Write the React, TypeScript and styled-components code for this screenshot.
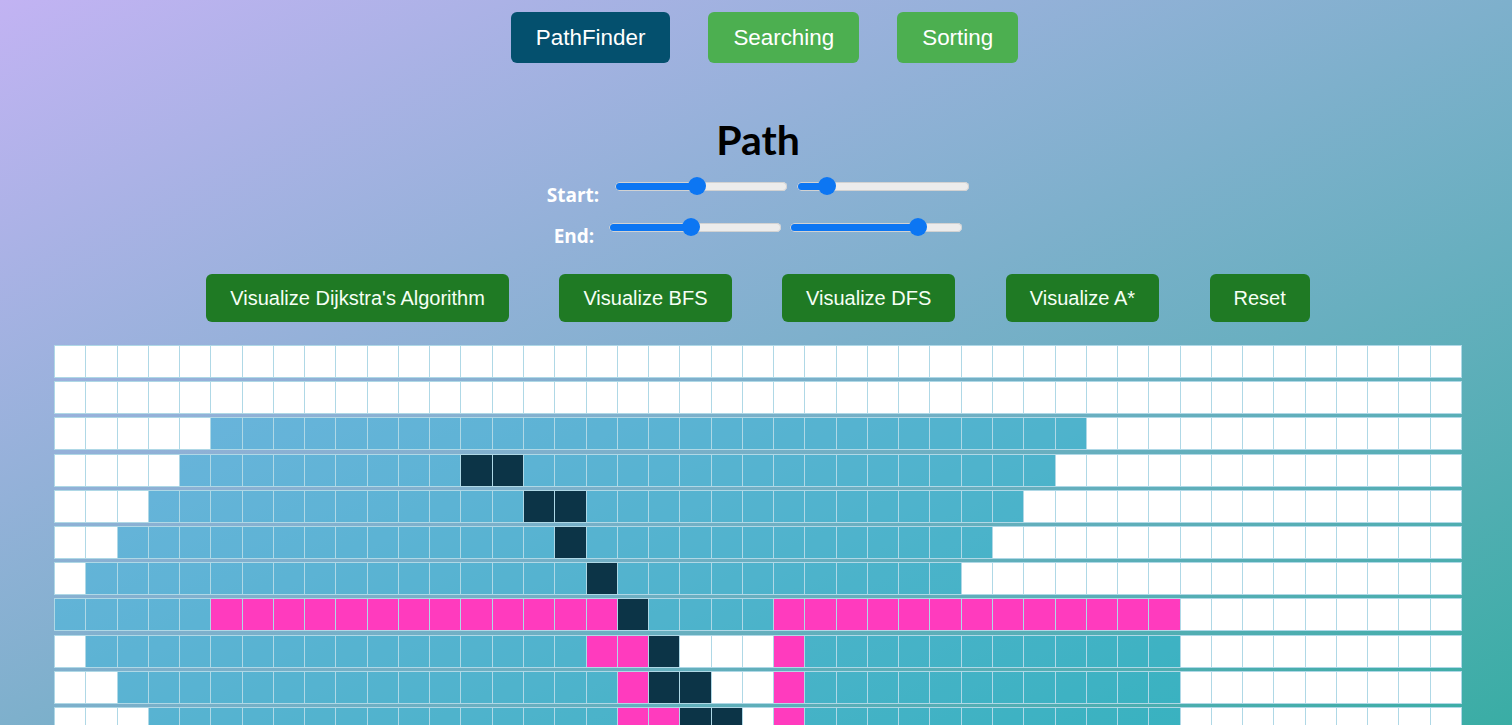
import React from "react";
import styled, { createGlobalStyle } from "styled-components";

const GlobalStyle = createGlobalStyle`
  html, body {
    margin: 0;
    padding: 0;
    height: 100%;
    overflow: hidden;
  }
  body {
    font-family: "Liberation Sans", Arial, sans-serif;
  }
`;

type Kind = "w" | "v" | "p" | "x";

const Page = styled.div`
  box-sizing: border-box;
  height: 100vh;
  overflow: hidden;
  padding-left: 4px;
  display: flex;
  flex-direction: column;
  align-items: center;
  background: linear-gradient(to bottom right, #c2b3f3, #3aada5);
`;

const Nav = styled.nav`
  display: flex;
  gap: 38px;
  margin-top: 12px;
  padding-left: 13px;
`;

const NavButton = styled.button<{ $active?: boolean }>`
  height: 51px;
  padding: 0 25px;
  border: none;
  border-radius: 6px;
  background: ${(p) => (p.$active ? "#04506e" : "#4caf50")};
  color: #ffffff;
  font-family: "Liberation Sans", Arial, sans-serif;
  font-size: 22.4px;
  cursor: pointer;
`;

const Title = styled.h1`
  margin: 53px 0 0;
  font-family: Lato, "Open Sans", sans-serif;
  font-weight: 700;
  font-size: 41px;
  line-height: 48px;
  color: #000;
`;

const Controls = styled.div`
  display: flex;
  flex-direction: column;
  align-items: center;
  gap: 5px;
  margin-top: 7px;
`;

const SliderRow = styled.div<{ $gap: number }>`
  display: flex;
  align-items: flex-start;
  height: 36px;
  gap: ${(p) => p.$gap}px;
`;

const Label = styled.label`
  margin-top: 12.5px;
  margin-right: 6px;
  font-family: "Open Sans", "Noto Sans", sans-serif;
  font-weight: 700;
  font-size: 19px;
  line-height: 22px;
  color: #ffffff;
`;

const Range = styled.input<{ $fill: number }>`
  -webkit-appearance: none;
  appearance: none;
  width: 172px;
  height: 18px;
  margin: 6px 0 0;
  padding: 0;
  background: transparent;
  cursor: pointer;

  &::-webkit-slider-runnable-track {
    height: 9px;
    border-radius: 5px;
    box-shadow: inset 0 0 0 1px #d2d2d2;
    background: linear-gradient(
      to right,
      #0c76f3 0,
      #0c76f3 ${(p) => p.$fill}%,
      #ececec ${(p) => p.$fill}%,
      #ececec 100%
    );
  }
  &::-webkit-slider-thumb {
    -webkit-appearance: none;
    appearance: none;
    width: 18px;
    height: 18px;
    margin-top: -4.5px;
    border-radius: 50%;
    background: #0c76f3;
    border: none;
  }
`;

const ButtonBar = styled.div`
  display: flex;
  gap: 50.5px;
  margin-top: 26px;
`;

const AlgoButton = styled.button`
  height: 48px;
  padding: 0 24px;
  border: none;
  border-radius: 6px;
  background: #1f7a24;
  color: #f6fff4;
  font-family: "Liberation Sans", Arial, sans-serif;
  font-size: 20px;
  cursor: pointer;
`;

const Grid = styled.div`
  width: 1408px;
  margin-top: 23px;
  display: flex;
  flex-direction: column;
  gap: 3.2px;
`;

const Row = styled.div`
  display: flex;
`;

const colors: Record<Kind, string> = {
  w: "#ffffff",
  v: "rgba(29, 186, 227, 0.35)",
  p: "#ff3bbe",
  x: "#0c3447",
};

const Cell = styled.div<{ $kind: Kind }>`
  box-sizing: border-box;
  flex: 1 1 0;
  min-width: 0;
  height: 33px;
  border: 1px solid #afd8e6;
  border-right: none;
  background: ${(p) => colors[p.$kind]};
  &:last-child {
    border-right: 1px solid #afd8e6;
  }
`;

type Seg = [Kind, number];

const layout: Seg[][] = [
  [["w", 45]],
  [["w", 45]],
  [["w", 5], ["v", 28], ["w", 12]],
  [["w", 4], ["v", 9], ["x", 2], ["v", 17], ["w", 13]],
  [["w", 3], ["v", 12], ["x", 2], ["v", 14], ["w", 14]],
  [["w", 2], ["v", 14], ["x", 1], ["v", 13], ["w", 15]],
  [["w", 1], ["v", 16], ["x", 1], ["v", 11], ["w", 16]],
  [["v", 5], ["p", 13], ["x", 1], ["v", 4], ["p", 13], ["w", 9]],
  [["w", 1], ["v", 16], ["p", 2], ["x", 1], ["w", 3], ["p", 1], ["v", 12], ["w", 9]],
  [["w", 2], ["v", 16], ["p", 1], ["x", 2], ["w", 2], ["p", 1], ["v", 12], ["w", 9]],
  [["w", 3], ["v", 15], ["p", 2], ["x", 2], ["w", 1], ["p", 1], ["v", 12], ["w", 9]],
  [["w", 4], ["v", 14], ["p", 1], ["x", 2], ["w", 2], ["p", 1], ["v", 12], ["w", 9]],
  [["w", 5], ["v", 13], ["p", 1], ["x", 1], ["w", 3], ["p", 1], ["v", 12], ["w", 9]],
  [["w", 6], ["v", 13], ["p", 4], ["p", 1], ["v", 12], ["w", 9]],
  [["w", 7], ["v", 29], ["w", 9]],
  [["w", 8], ["v", 27], ["w", 10]],
  [["w", 9], ["v", 25], ["w", 11]],
  [["w", 10], ["v", 23], ["w", 12]],
  [["w", 11], ["v", 21], ["w", 13]],
  [["w", 45]],
];

const expand = (segs: Seg[]): Kind[] =>
  segs.flatMap(([k, n]) => Array.from({ length: n }, () => k));

const ROW_MAX = 19;
const COL_MAX = 44;

const fillPct = (value: number, max: number) => {
  const w = 172;
  const thumb = 18;
  return ((thumb / 2 + (value / max) * (w - thumb)) / w) * 100;
};

const Slider: React.FC<{ initial: number; max: number }> = ({ initial, max }) => {
  const [value, setValue] = React.useState(initial);
  return (
    <Range
      type="range"
      min={0}
      max={max}
      value={value}
      $fill={fillPct(value, max)}
      onChange={(e) => setValue(Number(e.target.value))}
    />
  );
};

export default function App() {
  const grid = React.useMemo(() => layout.map(expand), []);
  return (
    <>
      <GlobalStyle />
      <Page>
        <Nav>
          <NavButton $active>PathFinder</NavButton>
          <NavButton>Searching</NavButton>
          <NavButton>Sorting</NavButton>
        </Nav>
        <Title>Path</Title>
        <Controls>
          <SliderRow $gap={10}>
            <Label>Start:</Label>
            <Slider initial={9} max={ROW_MAX} />
            <Slider initial={6} max={COL_MAX} />
          </SliderRow>
          <SliderRow $gap={9}>
            <Label>End:</Label>
            <Slider initial={9} max={ROW_MAX} />
            <Slider initial={34} max={COL_MAX} />
          </SliderRow>
        </Controls>
        <ButtonBar>
          <AlgoButton>Visualize Dijkstra's Algorithm</AlgoButton>
          <AlgoButton>Visualize BFS</AlgoButton>
          <AlgoButton>Visualize DFS</AlgoButton>
          <AlgoButton>Visualize A*</AlgoButton>
          <AlgoButton>Reset</AlgoButton>
        </ButtonBar>
        <Grid>
          {grid.map((row, r) => (
            <Row key={r}>
              {row.map((kind, c) => (
                <Cell key={c} $kind={kind} />
              ))}
            </Row>
          ))}
        </Grid>
      </Page>
    </>
  );
}
